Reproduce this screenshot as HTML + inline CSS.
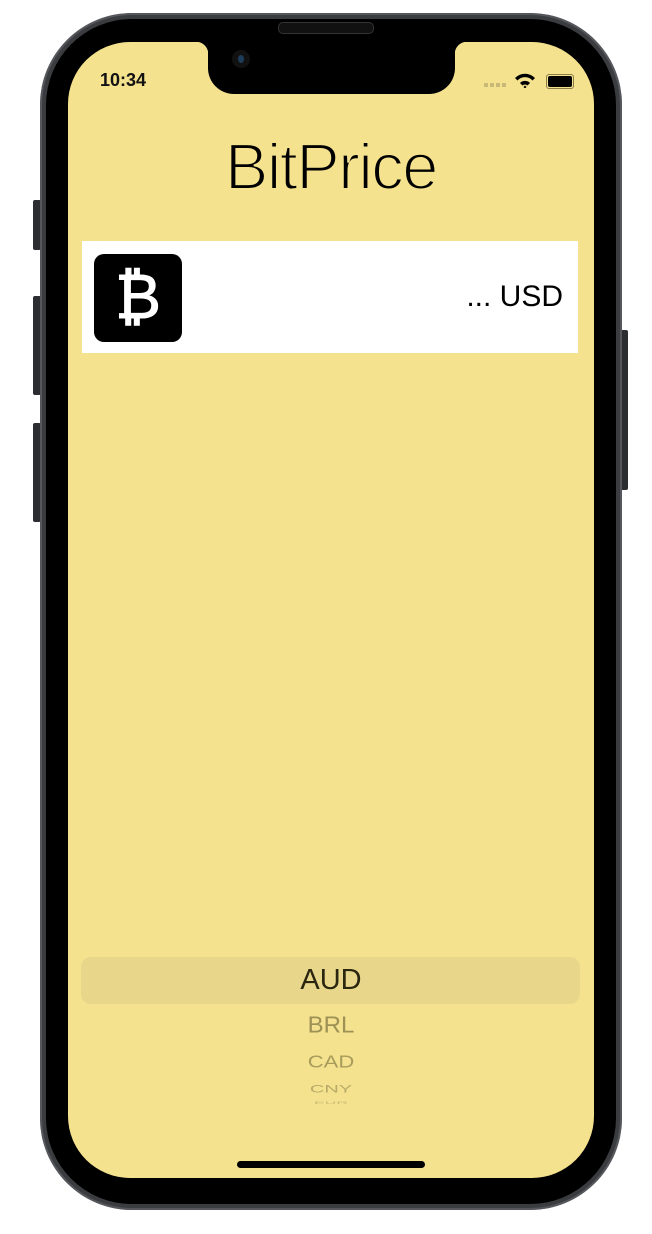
<!DOCTYPE html>
<html><head><style>
body{margin:0;width:652px;height:1234px;background:#fff;position:relative;overflow:hidden;font-family:"Liberation Sans",sans-serif}
.btn{position:absolute;background:#2b2d31;border-radius:2px}
.frame{position:absolute;left:40px;top:13px;width:582px;height:1197px;border-radius:92px;background:#3a3c40;box-shadow:inset 0 0 0 2px #55575c}
.bezel{position:absolute;left:46px;top:19px;width:570px;height:1185px;border-radius:86px;background:#000}
.screen{position:absolute;left:68px;top:42px;width:526px;height:1136px;border-radius:62px;background:#f4e28e;overflow:hidden}
.notch{position:absolute;left:140px;top:0;width:247px;height:52px;background:#000;border-radius:0 0 26px 26px}
.notch:before{content:"";position:absolute;left:-12px;top:0;width:12px;height:12px;background:radial-gradient(circle at 0 100%,transparent 12px,#000 12.5px)}
.notch:after{content:"";position:absolute;right:-12px;top:0;width:12px;height:12px;background:radial-gradient(circle at 100% 100%,transparent 12px,#000 12.5px)}
.spk{position:absolute;left:278px;top:22px;width:94px;height:10px;border-radius:5px;background:#111;border:1px solid #333}
.cam{position:absolute;left:232px;top:50px;width:18px;height:18px;border-radius:50%;background:#111}
.cam:after{content:"";position:absolute;left:6px;top:5px;width:6px;height:8px;border-radius:50%;background:#1e3d5a}
</style></head><body>
<div class="btn" style="left:33px;top:200px;width:8px;height:50px"></div>
<div class="btn" style="left:33px;top:296px;width:8px;height:99px"></div>
<div class="btn" style="left:33px;top:423px;width:8px;height:99px"></div>
<div class="btn" style="left:620px;top:330px;width:8px;height:160px"></div>
<div class="frame"></div>
<div class="bezel"></div>
<div class="screen">
  <div class="notch"></div>
  <div style="position:absolute;left:32px;top:28px;font-size:18px;font-weight:bold;color:#111">10:34</div>
  <div style="position:absolute;left:416px;top:41px;width:24px;height:4px;background:repeating-linear-gradient(90deg,#c8b978 0 4px,transparent 4px 6px)"></div>
  <svg style="position:absolute;left:446px;top:30px" width="22" height="16" viewBox="0 0 22 16"><path d="M1 6 A14 14 0 0 1 21 6 L18.5 8.5 A10 10 0 0 0 3.5 8.5Z M6 11 A7 7 0 0 1 16 11 L13.5 13.5 A3.5 3.5 0 0 0 8.5 13.5Z M9.5 15 L11 13.5 L12.5 15 L11 16.5Z" fill="#000"/></svg>
  <div style="position:absolute;left:478px;top:32px;width:24px;height:11px;border:1px solid #8a7e4a;border-radius:3px;padding:1px"><div style="width:24px;height:11px;background:#000;border-radius:2px"></div></div>
  <div style="position:absolute;left:0;width:526px;top:87px;text-align:center;font-size:65px;letter-spacing:-1.5px;color:#000;-webkit-text-stroke:2px #f4e28e">BitPrice</div>
  <div style="position:absolute;left:14px;top:199px;width:496px;height:112px;background:#fff">
    <div style="position:absolute;left:12px;top:13px;width:88px;height:88px;background:#000;border-radius:10px;color:#fff;font-size:62px;line-height:88px;text-align:center;-webkit-text-stroke:1px #fff">₿</div>
    <div style="position:absolute;right:15px;top:39px;font-size:30px;color:#000">... USD</div>
  </div>
  <div style="position:absolute;left:13px;top:915px;width:499px;height:47px;background:#e8d78b;border-radius:10px"></div>
  <div style="position:absolute;left:0;width:526px;top:922px;text-align:center;font-size:29px;color:#2a2610">AUD</div>
  <div style="position:absolute;left:0;width:526px;top:970px;text-align:center;font-size:24px;color:#9d9155;transform:scaleY(0.95)">BRL</div>
  <div style="position:absolute;left:0;width:526px;top:1007px;text-align:center;font-size:22px;color:#a89c5c;transform:scaleY(0.8)">CAD</div>
  <div style="position:absolute;left:0;width:526px;top:1036px;text-align:center;font-size:20px;color:#b8ab68;transform:scaleY(0.55)">CNY</div>
  <div style="position:absolute;left:0;width:526px;top:1052px;text-align:center;font-size:16px;color:#c9bb73;transform:scaleY(0.25)">EUR</div>
  <div style="position:absolute;left:169px;top:1119px;width:188px;height:7px;background:#000;border-radius:4px"></div>
</div>
<div class="spk"></div>
<div class="cam"></div>
</body></html>
